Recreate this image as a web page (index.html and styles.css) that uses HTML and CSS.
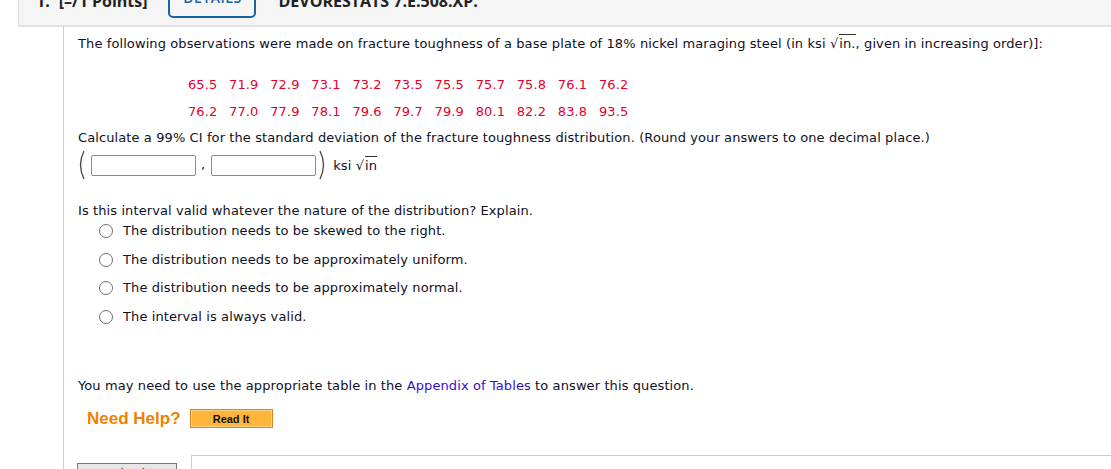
FILE: index.html
```html
<!DOCTYPE html>
<html>
<head>
<meta charset="utf-8">
<link rel="stylesheet" href="styles.css">
</head>
<body>
<div class="header">
  <span class="qnum">1.</span>
  <span class="points">[–/1 Points]</span>
  <span class="details">DETAILS</span>
  <span class="qid">DEVORESTATS 7.E.508.XP.</span>
</div>
<div class="main">
  <p class="intro">The following observations were made on fracture toughness of a base plate of 18% nickel maraging steel (in ksi <span class="sqrt">√<span class="rad">in.</span></span>, given in increasing order)]:</p>
  <div class="data">
    <span>65.5</span><span>71.9</span><span>72.9</span><span>73.1</span><span>73.2</span><span>73.5</span><span>75.5</span><span>75.7</span><span>75.8</span><span>76.1</span><span>76.2</span>
    <span>76.2</span><span>77.0</span><span>77.9</span><span>78.1</span><span>79.6</span><span>79.7</span><span>79.9</span><span>80.1</span><span>82.2</span><span>83.8</span><span>93.5</span>
  </div>
  <p class="calc">Calculate a 99% CI for the standard deviation of the fracture toughness distribution. (Round your answers to one decimal place.)</p>
  <div class="interval">
    <svg class="paren" width="10" height="30" viewBox="0 0 10 30"><path d="M7 1 Q0 15 7 29" fill="none" stroke="#444" stroke-width="1.3"/></svg>
    <span class="box"></span>
    <span class="comma">,</span>
    <span class="box"></span>
    <svg class="paren" width="10" height="30" viewBox="0 0 10 30"><path d="M3 1 Q10 15 3 29" fill="none" stroke="#444" stroke-width="1.3"/></svg>
    <span class="unit">ksi <span class="sqrt">√<span class="rad">in</span></span></span>
  </div>
  <p class="question">Is this interval valid whatever the nature of the distribution? Explain.</p>
  <ul class="options">
    <li><span class="radio"></span>The distribution needs to be skewed to the right.</li>
    <li><span class="radio"></span>The distribution needs to be approximately uniform.</li>
    <li><span class="radio"></span>The distribution needs to be approximately normal.</li>
    <li><span class="radio"></span>The interval is always valid.</li>
  </ul>
  <p class="note">You may need to use the appropriate table in the <a href="#">Appendix of Tables</a> to answer this question.</p>
  <div class="help">
    <span class="needhelp">Need Help?</span>
    <span class="readit">Read It</span>
  </div>
  <div class="submitrow">
    <span class="submit">Submit Answer</span>
    <div class="panel"></div>
  </div>
</div>
</body>
</html>
```
FILE: styles.css
```css
html, body {
  margin: 0;
  padding: 0;
  background: #fff;
  overflow: hidden;
}
body {
  font-family: "DejaVu Sans", Verdana, sans-serif;
  font-size: 13px;
  letter-spacing: 0.1px;
  color: #10101e;
  height: 469px;
}
.header {
  margin: -26px 0 0 18px;
  height: 51px;
  background: #f5f5f5;
  border-left: 1px solid #dcdcdc;
  border-bottom: 2px solid #e2e2e2;
  display: flex;
  align-items: center;
  padding-left: 17px;
  font-family: "Open Sans", sans-serif;
  font-weight: 700;
  font-size: 16px;
  letter-spacing: 0;
  color: #222;
}
.qnum, .points, .qid {
  padding-top: 2px;
}
.points {
  margin-left: 9px;
}
.details {
  margin-left: 21px;
  width: 84px;
  height: 29px;
  border: 2px solid #1b62a0;
  border-radius: 5px;
  color: #1b62a0;
  font-size: 14px;
  font-weight: 600;
  letter-spacing: 0.5px;
  display: flex;
  align-items: center;
  justify-content: center;
  padding-bottom: 4px;
  box-sizing: content-box;
}
.qid {
  margin-left: 22px;
}
.main {
  margin-left: 63px;
  border-left: 1px solid #cfcfcf;
  padding-left: 14px;
  height: 500px;
  line-height: 18px;
}
p {
  margin: 0;
}
.intro {
  padding-top: 8px;
}
.sqrt {
  white-space: nowrap;
}
.rad {
  border-top: 1px solid #333;
  padding-top: 1px;
  margin-left: 1px;
}
.data {
  display: grid;
  grid-template-columns: repeat(11, 41.1px);
  grid-auto-rows: 27px;
  align-items: center;
  margin: 18px 0 0 110px;
  color: #e4002b;
}
.calc {
  margin-top: 4px;
}
.interval {
  display: flex;
  align-items: center;
  height: 30px;
  margin-top: 3px;
}
.paren {
  display: block;
  margin-left: -1px;
}
.box {
  width: 103px;
  height: 19px;
  border: 1px solid #8a8a8a;
  border-radius: 2px;
  margin-left: 4px;
}
.interval .box + .comma + .box {
  margin-left: 6px;
}
.comma {
  align-self: flex-end;
  margin: 0 0 6px 5px;
  line-height: 18px;
}
.interval .paren:nth-of-type(2) {
  margin-left: 1px;
}
.unit {
  margin-left: 6px;
  padding-top: 2px;
}
.question {
  margin-top: 22px;
}
.options {
  list-style: none;
  margin: 2px 0 0 0;
  padding: 0 0 0 22px;
  display: flex;
  flex-direction: column;
  gap: 10.7px;
}
.options li {
  display: flex;
  align-items: center;
  height: 18px;
}
.radio {
  width: 12px;
  height: 12px;
  border: 1px solid #6f6f6f;
  border-radius: 50%;
  margin: 0 10px 0 -1px;
  background: #fff;
}
.note {
  margin-top: 51px;
}
.note a {
  color: #3311cc;
  text-decoration: none;
}
.help {
  display: flex;
  align-items: center;
  margin: 13px 0 0 9px;
  height: 21px;
}
.needhelp {
  font-family: "Liberation Sans", Arial, sans-serif;
  font-weight: 700;
  font-size: 17px;
  letter-spacing: 0;
  color: #ef8200;
}
.readit {
  margin-left: 9px;
  width: 81px;
  height: 17px;
  border: 1px solid #d4862a;
  box-shadow: inset 0 0 0 1px #ffd27a;
  background: #ffb43a;
  display: flex;
  align-items: center;
  justify-content: center;
  font-family: "Liberation Sans", Arial, sans-serif;
  font-weight: 700;
  font-size: 11px;
  letter-spacing: 0;
  color: #111;
}
.submitrow {
  display: flex;
  align-items: flex-start;
  margin-top: 26px;
}
.submit {
  margin: 8px 0 0 -1px;
  width: 98px;
  height: 22px;
  border: 1px solid #777;
  background: #e6e6e6;
  font-size: 13px;
  line-height: 20px;
  text-align: center;
  color: #222;
}
.panel {
  flex: 1;
  margin-left: 14px;
  height: 60px;
  border-top: 1px solid #cccccc;
  border-left: 1px solid #cccccc;
}
```
